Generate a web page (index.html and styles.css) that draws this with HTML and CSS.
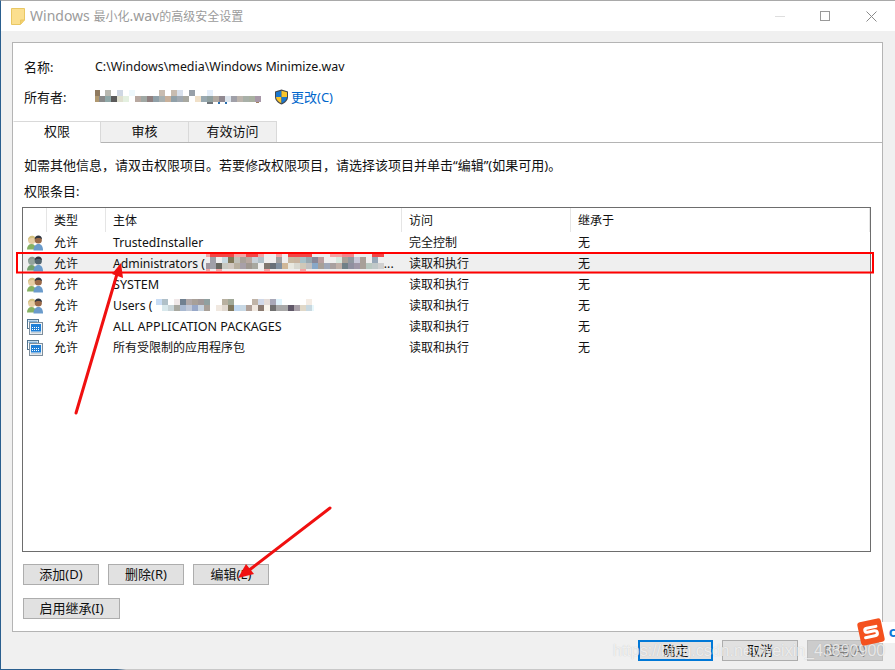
FILE: index.html
```html
<!DOCTYPE html>
<html lang="zh">
<head>
<meta charset="utf-8">
<title>Windows 最小化.wav的高级安全设置</title>
<link rel="stylesheet" href="styles.css">
</head>
<body>
<svg class="defs" width="0" height="0" aria-hidden="true">
  <symbol id="users" viewBox="0 0 16 16">
    <path d="M0 14.500c0-3.500 1.800-5.500 4.500-5.500s4.500 2 4.500 5.500z" fill="#86b163"/>
    <circle cx="4.800" cy="5.300" r="3.700" fill="#e6cda2"/>
    <path d="M1 5.500C.8 2.500 2.800.8 5 .8s4 1.500 3.500 4c-1-1.300-2-1.700-3.500-1.700S2 3.800 1 5.500z" fill="#d3c07f"/>
    <path d="M6.500 15.500c0-4 2-6.500 5-6.500s4.500 2.500 4.500 6.500z" fill="#6a9bcb"/>
    <circle cx="11.300" cy="5" r="3.600" fill="#9a6a48"/>
    <path d="M7.700 4.300C7.600 2 9.300.4 11.400.4s3.700 1.600 3.500 3.900c-.8-1-1.800-1.400-3.400-1.400s-2.900.4-3.800 1.400z" fill="#2f3540"/>
  </symbol>
  <symbol id="usersdim" viewBox="0 0 16 16">
    <path d="M0 14.500c0-3.500 1.800-5.500 4.500-5.500s4.500 2 4.500 5.500z" fill="#74a06e"/>
    <circle cx="4.800" cy="5.300" r="3.700" fill="#93a49d"/>
    <path d="M1 5.500C.8 2.500 2.800.8 5 .8s4 1.500 3.500 4c-1-1.300-2-1.700-3.500-1.700S2 3.800 1 5.500z" fill="#84968f"/>
    <path d="M6.500 15.500c0-4 2-6.500 5-6.500s4.500 2.500 4.500 6.500z" fill="#6a9bcb"/>
    <circle cx="11.300" cy="5" r="3.600" fill="#50646e"/>
    <path d="M7.700 4.300C7.600 2 9.300.4 11.400.4s3.700 1.600 3.500 3.900c-.8-1-1.800-1.400-3.400-1.400s-2.900.4-3.800 1.400z" fill="#2f3540"/>
  </symbol>
  <symbol id="pkg" viewBox="0 0 16 16">
    <rect x=".5" y=".5" width="11" height="9" fill="#fff" stroke="#51748f"/>
    <rect x="1.500" y="1.500" width="9" height="1.500" fill="#7fb0d8"/>
    <rect x="2.500" y="3.500" width="13" height="12" fill="#eef3f7" stroke="#7d8d9b"/>
    <rect x="4" y="5" width="10" height="7.500" fill="#1f7fd6"/>
    <path d="M5 8h1v1H5zm2 0h1v1H7zm2 0h1v1H9zm2 0h1v1h-1zM5 10h1v1H5zm2 0h1v1H7zm2 0h1v1H9zm2 0h1v1h-1z" fill="#fff"/>
    <rect x="4" y="13.200" width="10" height="1" fill="#b9c4cd"/>
  </symbol>
</svg>

<div class="window">
  <header class="titlebar">
    <svg class="folder" width="14" height="17" viewBox="0 0 14 17"><path d="M.5.500h13v11.500l-4 4.500H.5z" fill="#fbdf8f" stroke="#e9c763"/><path d="M9.500 16v-4h4" fill="#f3cf6b" stroke="#e9c763"/></svg>
    <span class="title">Windows <span class="cjk">最小化</span>.wav<span class="cjk">的高级安全设置</span></span>
    <div class="controls">
      <span class="ctl-min"></span>
      <span class="ctl-max"></span>
      <svg class="ctl-close" width="11" height="11" viewBox="0 0 11 11"><path d="M.5.500l10 10m0-10l-10 10" stroke="#8a8a8a" fill="none"/></svg>
    </div>
  </header>

  <main class="panel">
    <div class="info name-row"><span class="label">名称:</span><span class="path">C:\Windows\media\Windows Minimize.wav</span></div>
    <div class="info owner-row">
      <span class="label">所有者:</span>
      <svg class="mosaic owner-mosaic" width="166" height="14" viewBox="96 89 166 14">
        <g>
          <rect x="96" y="89" width="5" height="6" fill="#8f7a60"/><rect x="106" y="89" width="6" height="6" fill="#b8b8b0"/><rect x="118" y="89" width="6" height="6" fill="#d0d8e4"/><rect x="130" y="89" width="6" height="6" fill="#eef8fc"/><rect x="160" y="89" width="6" height="6" fill="#c8bcb0"/><rect x="172" y="89" width="6" height="6" fill="#c8bcb0"/><rect x="178" y="89" width="6" height="6" fill="#d8e0ec"/><rect x="190" y="89" width="6" height="6" fill="#98a0a8"/><rect x="208" y="89" width="6" height="6" fill="#e4eefa"/>
          <rect x="96" y="95" width="4" height="6" fill="#b09870"/><rect x="100" y="95" width="6" height="6" fill="#8a8a8a"/><rect x="106" y="95" width="6" height="6" fill="#90a8a8"/><rect x="112" y="95" width="6" height="6" fill="#5a5a5a"/><rect x="118" y="95" width="6" height="6" fill="#e0e0d0"/><rect x="124" y="95" width="6" height="6" fill="#e4f0e0"/><rect x="136" y="95" width="6" height="6" fill="#b8a8a0"/><rect x="142" y="95" width="6" height="6" fill="#a0a8a4"/><rect x="148" y="95" width="6" height="6" fill="#908080"/><rect x="154" y="95" width="6" height="6" fill="#90a0a8"/><rect x="160" y="95" width="6" height="6" fill="#a8b0b0"/><rect x="166" y="95" width="6" height="6" fill="#c8b09a"/><rect x="172" y="95" width="6" height="6" fill="#90a0a8"/><rect x="178" y="95" width="6" height="6" fill="#a0a8b0"/><rect x="184" y="95" width="6" height="6" fill="#a8a8a0"/><rect x="196" y="95" width="6" height="6" fill="#f0e0c8"/><rect x="202" y="95" width="6" height="6" fill="#98a8b0"/><rect x="208" y="95" width="6" height="6" fill="#90a0a0"/><rect x="214" y="95" width="6" height="6" fill="#b0a8a0"/><rect x="220" y="95" width="6" height="6" fill="#908890"/><rect x="226" y="95" width="6" height="6" fill="#dce4ec"/><rect x="232" y="95" width="6" height="6" fill="#a0a0a8"/><rect x="238" y="95" width="6" height="6" fill="#bcb4ac"/><rect x="244" y="95" width="6" height="6" fill="#a8b0a8"/><rect x="250" y="95" width="6" height="6" fill="#a8b0a0"/><rect x="256" y="95" width="6" height="6" fill="#a898a8"/>
          <rect x="208" y="101" width="6" height="2" fill="#70757a"/><rect x="219" y="101" width="2" height="2" fill="#2a70b0"/><rect x="226" y="101" width="2" height="2" fill="#2a70b0"/><rect x="257" y="101" width="3" height="1" fill="#a08060"/>
        </g>
      </svg>
      <svg class="shield" width="15" height="16" viewBox="0 0 15 16">
        <path d="M7.500.5L14 2.500v5.500c0 3.500-3 6-6.500 7.500C4 14 1 11.500 1 8V2.500z" fill="#44464c"/>
        <path d="M7.500 1.700v6.300H2V3.300z" fill="#1a78d0"/>
        <path d="M7.500 1.700L13 3.300V8H7.500z" fill="#f9c52c"/>
        <path d="M2 8h5.500v6.200C4.500 13 2.200 11 2 8z" fill="#f9c52c"/>
        <path d="M7.500 8H13c-.2 3-2.500 5-5.500 6.200z" fill="#1a78d0"/>
      </svg>
      <a class="change">更改(C)</a>
    </div>

    <nav class="tabs">
      <span class="tab active">权限</span>
      <span class="tab">审核</span>
      <span class="tab">有效访问</span>
    </nav>

    <p class="hint">如需其他信息，请双击权限项目。若要修改权限项目，请选择该项目并单击“编辑”(如果可用)。</p>
    <p class="hint sub">权限条目:</p>

    <section class="table">
      <div class="row head">
        <span class="cell"></span><span class="cell">类型</span><span class="cell">主体</span><span class="cell">访问</span><span class="cell">继承于</span>
      </div>
      <div class="row">
        <span class="cell icon"><svg width="16" height="16"><use href="#users"/></svg></span><span class="cell">允许</span><span class="cell latin">TrustedInstaller</span><span class="cell">完全控制</span><span class="cell">无</span>
      </div>
      <div class="row selected">
        <span class="cell icon"><svg width="16" height="16"><use href="#usersdim"/></svg></span><span class="cell">允许</span>
        <span class="cell principal latin">Administrators (<svg class="mosaic admin-mosaic" width="181" height="19" viewBox="204 254 181 19">
          <g fill="#f2a6a6">
            <rect x="204" y="254" width="4" height="3"/><rect x="208" y="254" width="24" height="3" fill="#f04848"/><rect x="232" y="254" width="12" height="3"/><rect x="244" y="254" width="12" height="3" fill="#f04848"/><rect x="256" y="254" width="6" height="3"/><rect x="274" y="254" width="6" height="3"/><rect x="286" y="254" width="24" height="3" fill="#f04848"/><rect x="328" y="254" width="12" height="3"/><rect x="340" y="254" width="12" height="3" fill="#f0888e"/><rect x="370" y="254" width="12" height="3" fill="#f04848"/>
            <rect x="204" y="269" width="4" height="2"/><rect x="214" y="269" width="6" height="2"/><rect x="262" y="269" width="6" height="2"/><rect x="298" y="269" width="6" height="2"/>
          </g>
          <g>
            <rect x="208" y="257" width="6" height="6" fill="#a0a0a8"/><rect x="220" y="257" width="6" height="6" fill="#c8d8e0"/><rect x="226" y="257" width="6" height="6" fill="#807858"/><rect x="232" y="257" width="6" height="6" fill="#c0c0b8"/><rect x="238" y="257" width="6" height="6" fill="#a8a098"/><rect x="244" y="257" width="6" height="6" fill="#b8a8a0"/><rect x="250" y="257" width="6" height="6" fill="#c8d0d8"/><rect x="256" y="257" width="6" height="6" fill="#b0c0c8"/><rect x="274" y="257" width="6" height="6" fill="#a0a0a0"/><rect x="286" y="257" width="6" height="6" fill="#c8b8a0"/><rect x="292" y="257" width="6" height="6" fill="#c8b4a0"/><rect x="298" y="257" width="6" height="6" fill="#a8c0c8"/><rect x="304" y="257" width="6" height="6" fill="#98a8b0"/><rect x="310" y="257" width="6" height="6" fill="#888898"/><rect x="316" y="257" width="6" height="6" fill="#b8a0a0"/><rect x="334" y="257" width="6" height="6" fill="#d8e8e0"/><rect x="340" y="257" width="6" height="6" fill="#a8a098"/><rect x="346" y="257" width="6" height="6" fill="#9098a0"/><rect x="352" y="257" width="6" height="6" fill="#c8c8d8"/><rect x="358" y="257" width="6" height="6" fill="#a8a098"/><rect x="370" y="257" width="6" height="6" fill="#98a8b8"/>
            <rect x="204" y="263" width="4" height="6" fill="#a098a0"/><rect x="208" y="263" width="6" height="6" fill="#a0a0a8"/><rect x="214" y="263" width="6" height="6" fill="#686860"/><rect x="220" y="263" width="6" height="6" fill="#c8c8c0"/><rect x="226" y="263" width="6" height="6" fill="#d0c8c0"/><rect x="232" y="263" width="6" height="6" fill="#b8b0a0"/><rect x="238" y="263" width="6" height="6" fill="#a8a0a8"/><rect x="244" y="263" width="6" height="6" fill="#a09890"/><rect x="250" y="263" width="6" height="6" fill="#a8a8a0"/><rect x="262" y="263" width="6" height="6" fill="#807870"/><rect x="268" y="263" width="6" height="6" fill="#687078"/><rect x="274" y="263" width="6" height="6" fill="#8090a0"/><rect x="280" y="263" width="6" height="6" fill="#d0b898"/><rect x="286" y="263" width="6" height="6" fill="#e8e8e0"/><rect x="292" y="263" width="6" height="6" fill="#d8d8d0"/><rect x="298" y="263" width="6" height="6" fill="#d0c8b8"/><rect x="304" y="263" width="6" height="6" fill="#c0c0c0"/><rect x="310" y="263" width="6" height="6" fill="#88a8c8"/><rect x="316" y="263" width="6" height="6" fill="#a8a098"/><rect x="322" y="263" width="6" height="6" fill="#a0a8b8"/><rect x="328" y="263" width="6" height="6" fill="#a8a0a0"/><rect x="334" y="263" width="6" height="6" fill="#c0b0a8"/><rect x="340" y="263" width="6" height="6" fill="#708088"/><rect x="346" y="263" width="6" height="6" fill="#9090a0"/><rect x="352" y="263" width="6" height="6" fill="#a098a8"/><rect x="358" y="263" width="6" height="6" fill="#a8a098"/><rect x="364" y="263" width="6" height="6" fill="#b8c8c0"/><rect x="370" y="263" width="6" height="6" fill="#c0c8c8"/><rect x="376" y="263" width="6" height="6" fill="#d0d0d0"/>
          </g>
        </svg><span class="dots">...</span></span>
        <span class="cell">读取和执行</span><span class="cell">无</span>
      </div>
      <div class="row">
        <span class="cell icon"><svg width="16" height="16"><use href="#users"/></svg></span><span class="cell">允许</span><span class="cell latin caps">SYSTEM</span><span class="cell">读取和执行</span><span class="cell">无</span>
      </div>
      <div class="row">
        <span class="cell icon"><svg width="16" height="16"><use href="#users"/></svg></span><span class="cell">允许</span>
        <span class="cell principal latin">Users (<svg class="mosaic users-mosaic" width="162" height="14" viewBox="150 299 162 14">
          <g>
            <rect x="154" y="299" width="6" height="6" fill="#c8dcf4"/><rect x="160" y="299" width="6" height="6" fill="#b0c0c8"/><rect x="172" y="299" width="6" height="6" fill="#f0e8e8"/><rect x="178" y="299" width="6" height="6" fill="#708090"/><rect x="184" y="299" width="6" height="6" fill="#b0a8a8"/><rect x="190" y="299" width="6" height="6" fill="#a8a098"/><rect x="196" y="299" width="6" height="6" fill="#a09898"/><rect x="202" y="299" width="6" height="6" fill="#90a0a0"/><rect x="220" y="299" width="6" height="6" fill="#b8b0a0"/><rect x="226" y="299" width="6" height="6" fill="#a0a898"/><rect x="250" y="299" width="6" height="6" fill="#c0b4a8"/><rect x="256" y="299" width="6" height="6" fill="#d0d8e8"/><rect x="262" y="299" width="6" height="6" fill="#e4dcd8"/><rect x="268" y="299" width="6" height="6" fill="#a8a8b8"/><rect x="274" y="299" width="6" height="6" fill="#e0f4fc"/><rect x="304" y="299" width="6" height="6" fill="#f4ece4"/>
            <rect x="160" y="305" width="6" height="6" fill="#d8e8ec"/><rect x="166" y="305" width="6" height="6" fill="#c8d4d8"/><rect x="172" y="305" width="6" height="6" fill="#a8a8a0"/><rect x="178" y="305" width="6" height="6" fill="#a8b8d0"/><rect x="184" y="305" width="6" height="6" fill="#c0c8d8"/><rect x="190" y="305" width="6" height="6" fill="#98a8c8"/><rect x="196" y="305" width="6" height="6" fill="#c8d4e0"/><rect x="202" y="305" width="6" height="6" fill="#a8a098"/><rect x="214" y="305" width="6" height="6" fill="#f0e8e0"/><rect x="220" y="305" width="6" height="6" fill="#e0d8d0"/><rect x="226" y="305" width="6" height="6" fill="#807860"/><rect x="232" y="305" width="6" height="6" fill="#c0d8f0"/><rect x="238" y="305" width="6" height="6" fill="#c8d8e4"/><rect x="244" y="305" width="6" height="6" fill="#b0a098"/><rect x="250" y="305" width="6" height="6" fill="#f0e8e0"/><rect x="256" y="305" width="6" height="6" fill="#8a7a70"/><rect x="262" y="305" width="6" height="6" fill="#f8f4ec"/><rect x="268" y="305" width="6" height="6" fill="#707070"/><rect x="274" y="305" width="6" height="6" fill="#a8a8a8"/><rect x="280" y="305" width="6" height="6" fill="#a8a8a8"/><rect x="286" y="305" width="6" height="6" fill="#605868"/><rect x="292" y="305" width="6" height="6" fill="#a8a0a8"/><rect x="298" y="305" width="6" height="6" fill="#e0d8c8"/><rect x="304" y="305" width="6" height="6" fill="#c8d8e0"/><rect x="310" y="305" width="2" height="6" fill="#e8f8fc"/>
          </g>
        </svg></span>
        <span class="cell">读取和执行</span><span class="cell">无</span>
      </div>
      <div class="row">
        <span class="cell icon"><svg width="16" height="16"><use href="#pkg"/></svg></span><span class="cell">允许</span><span class="cell latin caps">ALL APPLICATION PACKAGES</span><span class="cell">读取和执行</span><span class="cell">无</span>
      </div>
      <div class="row">
        <span class="cell icon"><svg width="16" height="16"><use href="#pkg"/></svg></span><span class="cell">允许</span><span class="cell">所有受限制的应用程序包</span><span class="cell">读取和执行</span><span class="cell">无</span>
      </div>
    </section>

    <div class="actions">
      <button class="btn">添加(D)</button>
      <button class="btn">删除(R)</button>
      <button class="btn">编辑(E)</button>
    </div>
    <div class="actions second">
      <button class="btn wide">启用继承(I)</button>
    </div>
  </main>

  <footer class="footer">
    <button class="btn primary">确定</button>
    <button class="btn">取消</button>
    <button class="btn disabled">应用(A)</button>
  </footer>

  <svg class="marks" width="895" height="670" viewBox="0 0 895 670" aria-hidden="true">
    <rect x="17" y="253" width="856" height="19.500" fill="none" stroke="#ff0000" stroke-width="2"/>
    <path d="M76 413L117 274" stroke="#f01010" stroke-width="3" stroke-linecap="round" fill="none"/>
    <path d="M121 263L123 278L112 274z" fill="#f01010"/>
    <path d="M330 508L248 571" stroke="#f01010" stroke-width="3" stroke-linecap="round" fill="none"/>
    <path d="M238 578L246 564L254 574z" fill="#f01010"/>
  </svg>

  <div class="ime">
    <span class="ime-logo"><svg width="18" height="16" viewBox="0 0 18 16"><path d="M15 3.500H5.500C2.500 3.500 2.500 7 5.500 7.500h7c3.500.5 3.500 5-.5 5H2.500" fill="none" stroke="#fff" stroke-width="3" stroke-linecap="round"/></svg></span>
    <span class="ime-tail">c</span>
  </div>
  <span class="watermark">https://blog.csdn.net/weixin_43890900</span>
</div>
</body>
</html>
```

FILE: styles.css
```css
* { box-sizing: border-box; }

html, body {
  margin: 0;
  padding: 0;
  width: 895px;
  height: 670px;
  overflow: hidden;
  background: #f0f0f0;
}

body {
  font-family: "Noto Sans", "Noto Sans CJK SC", sans-serif;
  font-size: 13px;
  line-height: 20px;
  color: #111;
}

.defs { position: absolute; }

.window {
  position: relative;
  width: 895px;
  height: 670px;
  display: flex;
  flex-direction: column;
  background: #f0f0f0;
  border-top: 1px solid #a9a9a9;
  border-left: 1px solid #2a5f8f;
  overflow: hidden;
}

.window::after {
  content: "";
  position: absolute;
  left: 0;
  right: 0;
  bottom: 0;
  height: 1px;
  background: linear-gradient(90deg, #2a5f8f 0, #2a5f8f 116px, #c8c8c8 125px, #c8c8c8 100%);
}

.titlebar {
  height: 30px;
  flex: none;
  display: flex;
  align-items: center;
  background: #fff;
  padding-left: 10px;
}

.title {
  margin-left: 5px;
  font-size: 14px;
  color: #9b9b9b;
}

.title .cjk { font-size: 12px; }

.controls {
  margin-left: auto;
  display: flex;
  align-items: center;
  height: 100%;
}

.ctl-min {
  width: 10px;
  height: 1px;
  background: #dedede;
  margin-right: 35px;
}

.ctl-max {
  width: 10px;
  height: 10px;
  border: 1px solid #999;
  margin-right: 36px;
}

.ctl-close { margin-right: 18px; }

.panel {
  flex: none;
  width: 871px;
  height: 590px;
  margin: 11px 0 0 11px;
  background: #fff;
  border: 1px solid #b4b4b4;
  display: flex;
  flex-direction: column;
}

.info {
  display: flex;
  align-items: center;
  height: 20px;
  margin-left: 11px;
  flex: none;
}

.name-row { margin-top: 14px; }
.owner-row { margin-top: 10px; }

.path { font-size: 12.4px; }

.label { width: 71px; flex: none; }

.mosaic { display: block; flex: none; }

.shield { margin-left: 13px; flex: none; }

.change {
  margin-left: 2px;
  color: #0066cc;
}

.tabs {
  display: flex;
  flex: none;
  height: 22px;
  margin-top: 14px;
  border-bottom: 1px solid #b4b4b4;
}

.tab {
  width: 89px;
  height: 21px;
  display: flex;
  align-items: center;
  justify-content: center;
  padding-bottom: 3px;
  background: #f0f0f0;
  border: 1px solid #d9d9d9;
  border-bottom: none;
  margin-left: -1px;
}

.tab.active {
  width: 88px;
  height: 22px;
  padding-bottom: 4px;
  background: #fff;
  margin-left: 0;
  border-left-color: #fff;
}

.hint {
  margin: 12px 0 0 11px;
  flex: none;
}

.hint.sub { margin-top: 6px; }

.table {
  flex: none;
  width: 849px;
  height: 345px;
  margin: 6px 0 0 9px;
  border: 1px solid #6d6d6d;
  background: #fff;
  font-size: 12px;
}

.row {
  display: grid;
  grid-template-columns: 24px 59px 296px 169px 1fr;
  height: 21px;
  align-items: center;
}

.row.head {
  height: 24px;
  align-items: stretch;
}

.head .cell {
  border-right: 1px solid #e5e5e5;
  display: flex;
  align-items: center;
  padding-top: 1px;
}

.cell {
  padding-left: 7px;
  white-space: nowrap;
  overflow: hidden;
  min-width: 0;
}

.cell.latin { font-size: 12.2px; }
.cell.caps { font-size: 12.55px; }

.head .cell:first-child { padding-left: 0; }

.cell.icon {
  padding-left: 4px;
  display: flex;
  align-items: center;
}

.row.selected { background: #efefef; }

.principal {
  display: flex;
  align-items: center;
  height: 100%;
}

.admin-mosaic { margin-left: 1px; }
.users-mosaic { margin-left: 0; }

.dots { margin-left: -3px; }

.actions {
  display: flex;
  gap: 9px;
  margin: 12px 0 0 10px;
  flex: none;
}

.actions.second { margin-top: 13px; }

.btn {
  width: 76px;
  height: 21px;
  padding: 0 0 2px;
  background: #e1e1e1;
  border: 1px solid #adadad;
  font: inherit;
  line-height: 16px;
  color: #111;
}

.btn.wide { width: 97px; }

.footer {
  flex: none;
  display: flex;
  gap: 9px;
  justify-content: flex-end;
  padding-right: 12px;
  margin-top: 8px;
}

.btn.primary {
  width: 75px;
  border: 2px solid #0078d7;
}

.btn.disabled {
  background: #cccccc;
  border-color: #bfbfbf;
  color: #7d7d7d;
}

.marks {
  position: absolute;
  left: -1px;
  top: -1px;
  pointer-events: none;
}

.ime {
  position: absolute;
  left: 858px;
  top: 617px;
  width: 37px;
  height: 27px;
}

.ime-tail {
  position: absolute;
  left: 20px;
  top: 4px;
  width: 17px;
  height: 21px;
  background: #fff;
  color: #0a78d7;
  font-weight: 700;
  font-size: 14px;
  line-height: 19px;
  text-align: right;
  overflow: hidden;
}

.ime-logo {
  position: absolute;
  left: 0;
  top: 2px;
  width: 24px;
  height: 24px;
  border-radius: 3px;
  background: #f4511e;
  transform: rotate(-12deg);
  display: flex;
  align-items: center;
  justify-content: center;
  z-index: 1;
}

.watermark {
  position: absolute;
  left: 612px;
  top: 639px;
  font-family: "Liberation Sans", sans-serif;
  font-size: 16px;
  line-height: 22px;
  color: rgba(255, 255, 255, 0.72);
  text-shadow: 0 0 1px rgba(110, 110, 110, 0.35);
  white-space: nowrap;
}
```
